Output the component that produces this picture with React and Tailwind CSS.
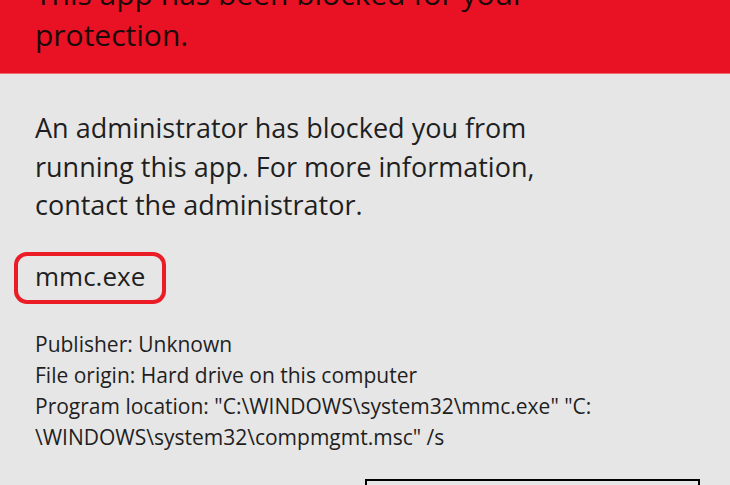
import React from 'react';

const FONT = { fontFamily: '"Open Sans", "Noto Sans", sans-serif' };

const BlockedDialog = () => {
  return (
    <div className="w-[730px] h-[485px] overflow-hidden bg-[#e6e6e6]" style={FONT}>
      {/* red banner, first line scrolled out of view */}
      <div className="bg-[#e81224] border-b border-[#f06a72] px-[35px] overflow-hidden h-[74px]">
        <h1 className="mt-[-27px] text-[30px] leading-[41px] text-[#1a0a0a] font-normal">
          This app has been blocked for your
          <br />
          protection.
        </h1>
      </div>

      <div className="px-[35px] pt-[35px]">
        <p className="text-[27px] leading-[38.5px] text-[#1f1f1f]">
          An administrator has blocked you from
          <br />
          running this app. For more information,
          <br />
          contact the administrator.
        </p>

        <div className="mt-[27px] ml-[-21px]">
          <span className="inline-block border-[4px] border-[#ec1c26] rounded-[13px] px-[17px] pt-[1px] pb-[5px] text-[26px] leading-[38px] text-[#1f1f1f]">
            mmc.exe
          </span>
        </div>

        <div className="mt-[25px] text-[21px] leading-[31px] text-[#1f1f1f]">
          <div>Publisher: Unknown</div>
          <div>File origin: Hard drive on this computer</div>
          <div>
            Program location: "C:\WINDOWS\system32\mmc.exe" "C:
            <br />
            \WINDOWS\system32\compmgmt.msc" /s
          </div>
        </div>
      </div>

      <div className="flex justify-end pr-[30px] mt-[26px]">
        <button className="w-[335px] h-[44px] border-2 border-black bg-[#e6e6e6]" />
      </div>
    </div>
  );
};

export default function App() {
  return <BlockedDialog />;
}
